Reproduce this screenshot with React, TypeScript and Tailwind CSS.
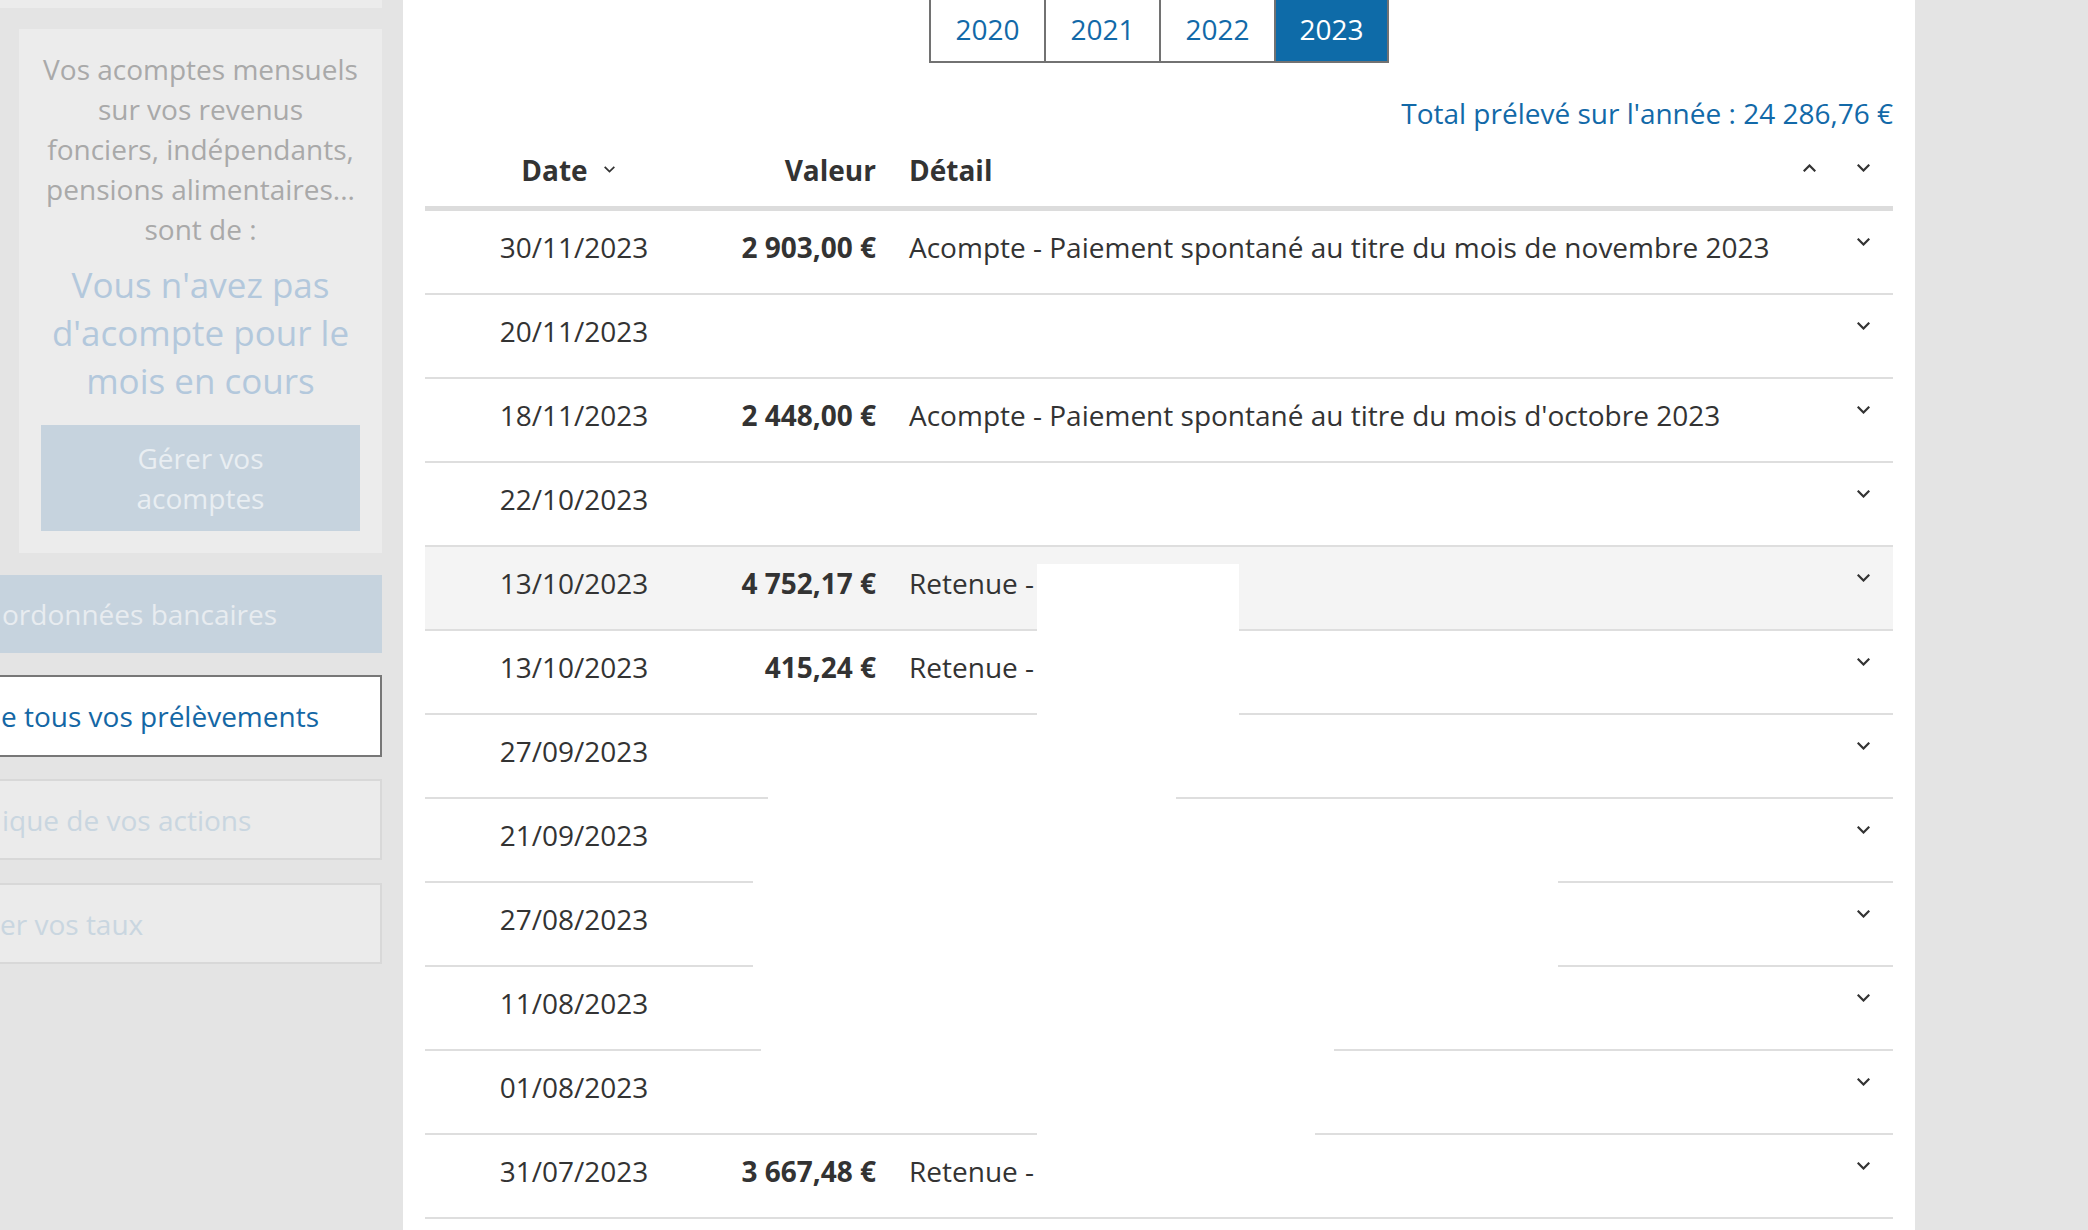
import React from 'react'

type Row = {
  date: string
  value?: string
  detail?: string
  active?: boolean
}

const rows: Row[] = [
  { date: '30/11/2023', value: '2 903,00 €', detail: 'Acompte - Paiement spontané au titre du mois de novembre 2023' },
  { date: '20/11/2023' },
  { date: '18/11/2023', value: '2 448,00 €', detail: "Acompte - Paiement spontané au titre du mois d'octobre 2023" },
  { date: '22/10/2023' },
  { date: '13/10/2023', value: '4 752,17 €', detail: 'Retenue -', active: true },
  { date: '13/10/2023', value: '415,24 €', detail: 'Retenue -' },
  { date: '27/09/2023' },
  { date: '21/09/2023' },
  { date: '27/08/2023' },
  { date: '11/08/2023' },
  { date: '01/08/2023' },
  { date: '31/07/2023', value: '3 667,48 €', detail: 'Retenue -' },
]

const years = ['2020', '2021', '2022', '2023']

function Chevron({ up = false, small = false }: { up?: boolean; small?: boolean }) {
  return (
    <svg
      width={small ? 11 : 13}
      height={small ? 7 : 8}
      viewBox="0 0 13 8"
      fill="none"
      stroke="#333333"
      strokeWidth={small ? 2 : 2.2}
      strokeLinecap="square"
      className="shrink-0"
    >
      {up ? <polyline points="1.5,6.5 6.5,1.5 11.5,6.5" /> : <polyline points="1.5,1.5 6.5,6.5 11.5,1.5" />}
    </svg>
  )
}

// label whose start is pushed out of view on the left
function ClippedLabel({ hidden, shown }: { hidden: string; shown: string }) {
  return (
    <span className="flex-1 overflow-hidden flex whitespace-nowrap">
      <span className="w-0 flex justify-end">{hidden}</span>
      <span>{shown}</span>
    </span>
  )
}

function Sidebar() {
  return (
    <aside className="w-[403px] shrink-0 h-full overflow-hidden flex flex-col">
      <div className="h-[8px] w-[382px] bg-[#ececec]" />

      <div className="mt-[21px] ml-[19px] w-[363px] bg-[#ececec] px-[22px] pt-[20px] pb-[22px] flex flex-col items-center text-center">
        <p className="text-[28px] leading-[40px] text-[#a9a9a9]">
          Vos acomptes mensuels
          <br />
          sur vos revenus
          <br />
          fonciers, indépendants,
          <br />
          pensions alimentaires...
          <br />
          sont de :
        </p>
        <p className="mt-[12px] text-[35px] leading-[48px] text-[#b3c8dc]">
          Vous n'avez pas
          <br />
          d'acompte pour le
          <br />
          mois en cours
        </p>
        <button className="mt-[20px] w-full h-[106px] bg-[#c6d3de] text-[#e9eef2] text-[28px] leading-[40px]">
          Gérer vos
          <br />
          acomptes
        </button>
      </div>

      <div className="mt-[22px] -ml-[20px] w-[402px] h-[78px] bg-[#c6d3de] text-[#e8ecf0] text-[28px] flex items-center pl-[22px] overflow-hidden">
        <ClippedLabel hidden="Gérer vos Co" shown="ordonnées bancaires" />
      </div>

      <div className="mt-[22px] -ml-[20px] w-[402px] h-[82px] bg-white border-2 border-[#777777] text-[#1467a5] text-[28px] flex items-center pl-[19px] overflow-hidden">
        <ClippedLabel hidden="Consulter le détail d" shown="e tous vos prélèvements" />
      </div>

      <div className="mt-[22px] -ml-[20px] w-[402px] h-[81px] bg-[#ebebeb] border-2 border-[#d8d8d8] text-[#c9d6e0] text-[28px] flex items-center pl-[20px] overflow-hidden">
        <ClippedLabel hidden="Consulter l'histor" shown="ique de vos actions" />
      </div>

      <div className="mt-[23px] -ml-[20px] w-[402px] h-[81px] bg-[#ebebeb] border-2 border-[#d8d8d8] text-[#c9d6e0] text-[28px] flex items-center pl-[18px] overflow-hidden">
        <ClippedLabel hidden="Gér" shown="er vos taux" />
      </div>
    </aside>
  )
}

function YearTabs() {
  return (
    <div className="flex justify-center">
      <div className="flex h-[63px] border-b-2 border-[#727272]">
        {years.map((y, i) => (
          <div
            key={y}
            className={`w-[115px] flex items-center justify-center pb-[4px] text-[28px] border-l-2 border-[#727272] ${
              i === years.length - 1 ? 'border-r-2 bg-[#0e6ba8] text-white' : 'bg-white text-[#1269a8]'
            }`}
          >
            {y}
          </div>
        ))}
      </div>
    </div>
  )
}

function TableRow({ row }: { row: Row }) {
  return (
    <div
      className={`flex items-start h-[84px] pt-[16px] border-b-2 border-[#dedede] text-[28px] leading-[40px] text-[#333333] ${
        row.active ? 'bg-[#f4f4f4]' : ''
      }`}
    >
      <div className="w-[298px] text-center">{row.date}</div>
      <div className="w-[153px] text-right font-bold whitespace-nowrap">{row.value}</div>
      <div className="flex-1 pl-[33px] whitespace-nowrap">{row.detail}</div>
      <div className="pr-[23px] pt-[11px]">
        <Chevron />
      </div>
    </div>
  )
}

function Prelevements() {
  return (
    <main className="relative w-[1512px] shrink-0 h-full bg-white overflow-hidden">
      <YearTabs />

      <div className="px-[22px]">
        <div className="mt-[30px] text-right text-[28px] leading-[40px] text-[#1269a8]">
          Total prélevé sur l'année : 24 286,76 €
        </div>

        <div className="flex items-center h-[73px] border-b-[5px] border-[#dcdcdc] box-content text-[28px] font-bold text-[#333333]">
          <div className="w-[298px] flex items-center justify-center gap-[16px] pr-[12px]">
            <span>Date</span>
            <Chevron small />
          </div>
          <div className="w-[153px] text-right">Valeur</div>
          <div className="flex-1 pl-[33px]">Détail</div>
          <div className="flex items-center gap-[41px] pr-[23px] pb-[4px]">
            <Chevron up />
            <Chevron />
          </div>
        </div>

        {rows.map((row, i) => (
          <TableRow key={i} row={row} />
        ))}
      </div>

      {/* masked areas of the capture */}
      <div className="absolute left-[634px] top-[564px] w-[202px] h-[153px] bg-white" />
      <div className="absolute left-[365px] top-[788px] w-[408px] h-[16px] bg-white" />
      <div className="absolute left-[350px] top-[872px] w-[805px] h-[100px] bg-white" />
      <div className="absolute left-[358px] top-[1040px] w-[573px] h-[16px] bg-white" />
      <div className="absolute left-[634px] top-[1124px] w-[278px] h-[16px] bg-white" />
    </main>
  )
}

export default function App() {
  return (
    <div
      className="flex w-[2088px] h-[1230px] overflow-hidden bg-[#e4e4e4]"
      style={{ fontFamily: '"Open Sans", "Noto Sans", sans-serif' }}
    >
      <Sidebar />
      <Prelevements />
    </div>
  )
}
